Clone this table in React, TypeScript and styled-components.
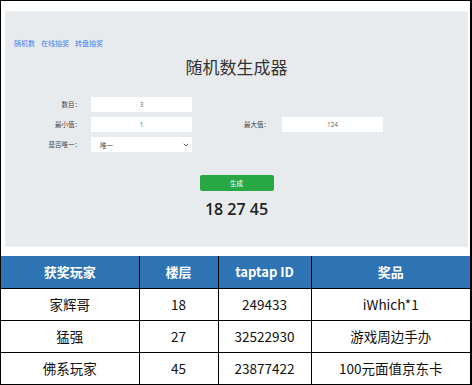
import React from "react";
import styled, { createGlobalStyle } from "styled-components";

const GlobalStyle = createGlobalStyle`
  html, body {
    margin: 0;
    padding: 0;
    background: #ffffff;
  }
  * {
    box-sizing: border-box;
  }
`;

const cjk = `"Noto Sans CJK SC", "Noto Sans", sans-serif`;

type Winner = {
  name: string;
  floor: number;
  taptapId: string;
  prize: string;
};

const winners: Winner[] = [
  { name: "家辉哥", floor: 18, taptapId: "249433", prize: "iWhich*1" },
  { name: "猛强", floor: 27, taptapId: "32522930", prize: "游戏周边手办" },
  { name: "佛系玩家", floor: 45, taptapId: "23877422", prize: "100元面值京东卡" },
];

const App = () => {
  return (
    <>
      <GlobalStyle />
      <Frame>
        <Panel>
          <Nav>
            <NavLink>随机数</NavLink>
            <NavLink>在线抽奖</NavLink>
            <NavLink>转盘抽奖</NavLink>
          </Nav>
          <Title>随机数生成器</Title>

          <Form>
            <Label>数目：</Label>
            <Field>3</Field>
            <span />
            <span />

            <Label>最小值：</Label>
            <Field>1</Field>
            <Label $wide>最大值：</Label>
            <Field>124</Field>

            <Label>是否唯一：</Label>
            <Select>
              唯一
              <svg width="6" height="4" viewBox="0 0 6 4">
                <path d="M0.8 0.8 L3 3 L5.2 0.8" fill="none" stroke="#444" strokeWidth="0.9" />
              </svg>
            </Select>
          </Form>

          <GenerateButton>生成</GenerateButton>
          <Result>18 27 45</Result>
        </Panel>

        <WinnerTable>
          <colgroup>
            <col style={{ width: 138 }} />
            <col style={{ width: 79 }} />
            <col style={{ width: 93 }} />
            <col />
          </colgroup>
          <thead>
            <tr>
              <Th>获奖玩家</Th>
              <Th>楼层</Th>
              <Th>taptap ID</Th>
              <Th>奖品</Th>
            </tr>
          </thead>
          <tbody>
            {winners.map((w) => (
              <tr key={w.taptapId}>
                <Td>{w.name}</Td>
                <Td>{w.floor}</Td>
                <Td>{w.taptapId}</Td>
                <Td>{w.prize}</Td>
              </tr>
            ))}
          </tbody>
        </WinnerTable>
      </Frame>
    </>
  );
};

export default App;

const Frame = styled.div`
  width: 472px;
  height: 385px;
  border: 1px solid #000;
  border-right-width: 2px;
  background: #fff;
  overflow: hidden;
`;

const Panel = styled.section`
  display: flex;
  flex-direction: column;
  height: 236px;
  margin: 10px 2px 9px 4px;
  padding-top: 25px;
  background: #e8ebee;
  border: 1px solid #eef0f2;
`;

const Nav = styled.nav`
  display: flex;
  gap: 6px;
  height: 12px;
  padding-left: 8px;
  font-family: ${cjk};
  font-size: 7px;
  line-height: 12px;
`;

const NavLink = styled.a`
  color: #3f82ec;
  cursor: pointer;
`;

const Title = styled.h1`
  margin: 6px 0 0;
  font-family: ${cjk};
  font-size: 17px;
  font-weight: 400;
  line-height: 24px;
  color: #333;
  text-align: center;
`;

const Form = styled.div`
  display: grid;
  grid-template-columns: 85px 101px 90px 101px;
  grid-auto-rows: 15px;
  row-gap: 5px;
  margin-top: 18px;
`;

const Label = styled.label<{ $wide?: boolean }>`
  padding-right: ${({ $wide }) => ($wide ? "12px" : "10px")};
  font-family: ${cjk};
  font-size: 6.5px;
  line-height: 15px;
  color: #444;
  text-align: right;
`;

const Field = styled.div`
  background: #fff;
  font-family: "Open Sans", sans-serif;
  font-size: 6.5px;
  line-height: 15px;
  color: #666;
  text-align: center;
`;

const Select = styled.div`
  display: flex;
  align-items: center;
  justify-content: space-between;
  padding: 0 3px 0 9px;
  background: #fff;
  font-family: ${cjk};
  font-size: 6.5px;
  color: #444;
`;

const GenerateButton = styled.button`
  align-self: center;
  width: 74px;
  height: 16px;
  margin-top: 23px;
  padding: 0;
  border: none;
  border-radius: 2px;
  background: #28a745;
  color: #fff;
  font-family: ${cjk};
  font-size: 6.5px;
`;

const Result = styled.div`
  margin-top: 8px;
  font-family: "Open Sans", sans-serif;
  font-size: 16px;
  font-weight: 600;
  line-height: 20px;
  color: #222;
  text-align: center;
`;

const WinnerTable = styled.table`
  width: 100%;
  border-collapse: collapse;
  border-style: hidden;
  table-layout: fixed;
  font-family: ${cjk};

  tr {
    height: 32px;
  }
`;

const Th = styled.th`
  border: 1px solid #000;
  background: #2e74b5;
  color: #fff;
  font-size: 13px;
  font-weight: 700;
  text-align: center;
  padding: 0;
`;

const Td = styled.td`
  border: 1px solid #000;
  color: #111;
  font-size: 13.5px;
  text-align: center;
  padding: 0;
`;
